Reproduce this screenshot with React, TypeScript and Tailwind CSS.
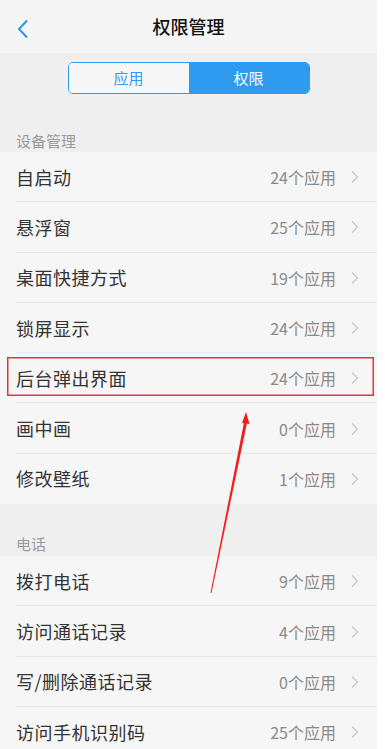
import React from 'react';

type Row = { name: string; count: number };

const deviceRows: Row[] = [
  { name: '自启动', count: 24 },
  { name: '悬浮窗', count: 25 },
  { name: '桌面快捷方式', count: 19 },
  { name: '锁屏显示', count: 24 },
  { name: '后台弹出界面', count: 24 },
  { name: '画中画', count: 0 },
  { name: '修改壁纸', count: 1 },
];

const phoneRows: Row[] = [
  { name: '拨打电话', count: 9 },
  { name: '访问通话记录', count: 4 },
  { name: '写/删除通话记录', count: 0 },
  { name: '访问手机识别码', count: 25 },
];

const Chevron = () => (
  <svg width="10" height="14" viewBox="0 0 10 14" className="ml-[14px]">
    <path d="M2 1.5 L7.5 7 L2 12.5" fill="none" stroke="#c8c8c8" strokeWidth="1.3" />
  </svg>
);

const PermRow = ({ row, last }: { row: Row; last: boolean }) => (
  <div className="flex h-[50.3px] items-center pl-4 pr-[17px] relative">
    <span className="text-[18px] text-[#333333] tracking-[0.5px]">{row.name}</span>
    <span className="ml-auto text-[16px] text-[#8a8a8a]">{row.count}个应用</span>
    <Chevron />
    {!last && <div className="absolute left-4 right-0 bottom-0 h-px bg-[#e8e8e8]" />}
  </div>
);

export default function App() {
  return (
    <div className="w-[385px] h-[749px] bg-white overflow-hidden" style={{ fontFamily: '"Noto Sans CJK SC", "Noto Sans", sans-serif' }}>
      <div className="w-[377px] h-full relative bg-[#f6f6f6]">
        {/* header */}
        <div className="h-[53px] flex items-center justify-center relative bg-[#f5f5f5]">
          <svg width="12" height="20" viewBox="0 0 12 20" className="absolute left-[17px] top-[19px]">
            <path d="M10 1.5 L2 10 L10 18.5" fill="none" stroke="#2b95ec" strokeWidth="2" />
          </svg>
          <span className="text-[18px] font-medium text-[#111111]">权限管理</span>
        </div>

        {/* tabs */}
        <div className="bg-[#efefef] pt-[9px] h-[99px]">
          <div className="mx-auto w-[242px] h-[32px] flex rounded-[5px] border border-[#2e9bf0] overflow-hidden">
            <div className="flex-1 flex items-center justify-center bg-[#f7f7f7] text-[15px] text-[#2e9bf0]">应用</div>
            <div className="flex-1 flex items-center justify-center bg-[#2e9bf0] text-[15px] text-white">权限</div>
          </div>
          <div className="mt-[36px] pl-4 text-[15px] leading-[22px] text-[#9a9a9a]">设备管理</div>
        </div>

        <div>
          {deviceRows.map((r, i) => (
            <PermRow key={r.name} row={r} last={i === deviceRows.length - 1} />
          ))}
        </div>

        <div className="bg-[#efefef] h-[52px] flex items-end pl-4 pb-[1px]">
          <span className="text-[15px] leading-[22px] text-[#9a9a9a]">电话</span>
        </div>

        <div>
          {phoneRows.map((r, i) => (
            <PermRow key={r.name} row={r} last={i === phoneRows.length - 1} />
          ))}
        </div>

        {/* annotation: red box + arrow drawn over the list */}
        <svg className="absolute left-0 top-0 pointer-events-none" width="377" height="749" viewBox="0 0 377 749">
          <rect x="7.75" y="357.75" width="365.5" height="37.5" fill="none" stroke="#f03030" strokeWidth="1.5" />
          <polygon points="210.5,593 244.5,420 247.5,420.5 211.5,593" fill="#f51c1c" />
          <polygon points="246,412 242,423 249.5,424" fill="#f51c1c" />
        </svg>
      </div>
    </div>
  );
}
